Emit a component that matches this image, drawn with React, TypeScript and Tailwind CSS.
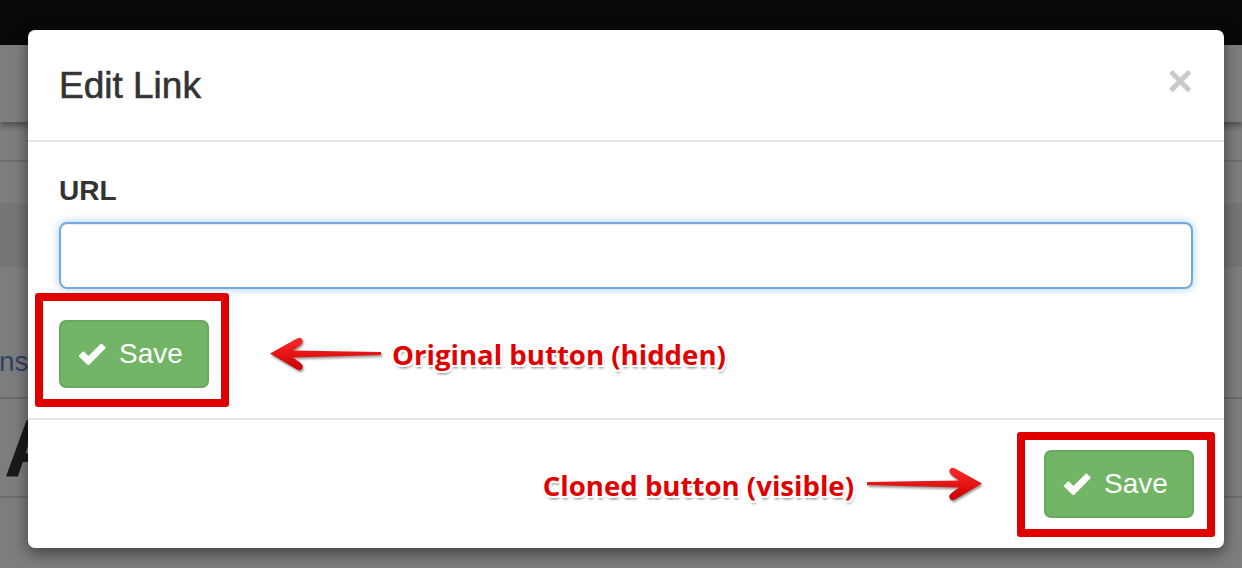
import React from "react";

function Check() {
  return (
    <svg width="28" height="23" viewBox="0 0 28 23" className="shrink-0">
      <path
        d="M1.2 12.2 L4.6 8.8 Q5.4 8 6.2 8.8 L10.4 13 L22.6 0.9 Q23.4 0.1 24.2 0.9 L27.3 4 Q28.1 4.8 27.3 5.6 L11.2 21.7 Q10.4 22.5 9.6 21.7 L1.2 13.8 Q0.4 13 1.2 12.2 Z"
        fill="#fff"
      />
    </svg>
  );
}

function Arrow({ flip, width, id }: { flip?: boolean; width: number; id: string }) {
  return (
    <svg
      width={width}
      height="36"
      viewBox={`0 0 ${width} 36`}
      className="shrink-0 drop-shadow-[1px_2px_1px_rgba(0,0,0,0.4)]"
    >
      <defs>
        <linearGradient id={id} x1="0" y1="0" x2="0" y2="1">
          <stop offset="0" stopColor="#ff2a2a" />
          <stop offset="1" stopColor="#c80000" />
        </linearGradient>
      </defs>
      <g transform={flip ? `translate(${width},0) scale(-1,1)` : undefined}>
        <path
          d={`M1 17.5 L28 2.5 Q32 0.5 33.5 4 Q34.5 7 31 9.5 L24 14.5 L${width} 16 L${width} 19 L24 21.5 L31 26.5 Q34.5 29 33.5 32 Q32 35.5 28 33.5 Z`}
          fill={`url(#${id})`}
        />
      </g>
    </svg>
  );
}

function Note({ children }: { children: React.ReactNode }) {
  return (
    <span className="whitespace-nowrap font-['Open_Sans',sans-serif] text-[27.6px] leading-[34px] font-bold text-[#e00000] [text-shadow:-2px_-2px_0_#fff,2px_-2px_0_#fff,-2px_2px_0_#fff,2px_2px_0_#fff,0_2px_0_#fff,0_-2px_0_#fff,2px_0_0_#fff,-2px_0_0_#fff,1px_3px_3px_rgba(0,0,0,0.55)]">
      {children}
    </span>
  );
}

function SaveButton() {
  return (
    <button className="flex h-[68px] w-[150px] shrink-0 items-center gap-[13px] rounded-[7px] border-2 border-[#68aa5c] bg-[#73b567] pl-[17px] text-[28px] leading-none text-white">
      <Check />
      <span>Save</span>
    </button>
  );
}

export default function App() {
  return (
    <div className="relative h-[568px] w-[1242px] overflow-hidden bg-[#fbfbfb] font-['Liberation_Sans',Arial,sans-serif]">
      {/* underlying page */}
      <div className="h-[45px] bg-[#111]" />
      <div className="relative h-[77px] bg-[#fdfdfd] shadow-[0_4px_6px_rgba(0,0,0,0.35)]" />
      <div className="h-[40px] border-b-2 border-[#dcdcdc]" />
      <div className="h-[41px]" />
      <div className="h-[64px] bg-[#ececec]" />
      <div className="flex h-[132px] items-center border-b-2 border-[#d6d6d6] pt-[60px]">
        <span className="-ml-[1px] text-[28px] leading-none text-[#5b8ac9]">ns</span>
      </div>
      <div className="flex h-[99px] items-center border-b-2 border-[#d6d6d6]">
        <span className="ml-[4px] text-[82px] leading-none font-bold text-[#333]">A</span>
      </div>

      {/* backdrop */}
      <div className="absolute inset-0 bg-black/50" />

      {/* modal */}
      <div className="absolute left-[28px] top-[30px] flex h-[518px] w-[1196px] flex-col rounded-[7px] bg-white shadow-[0_5px_15px_rgba(0,0,0,0.5)]">
        <div className="flex h-[112px] shrink-0 items-center justify-between border-b-2 border-[#e5e5e5] pl-[31px] pr-[31px]">
          <h4 className="text-[37px] leading-[37px] text-[#333] [-webkit-text-stroke:0.6px_#333]">Edit Link</h4>
          <span className="mb-[8px] text-[44px] leading-none font-bold text-[#c9c9c9]">×</span>
        </div>

        <div className="flex flex-col border-b-2 border-[#e5e5e5] px-[31px] pt-[35px] pb-[30px]">
          <label className="text-[28px] leading-[28px] font-bold text-[#333]">URL</label>
          <div className="mt-[17px] h-[67px] w-full rounded-[8px] border-2 border-[#74a9e0] shadow-[inset_0_1px_1px_rgba(0,0,0,0.08),0_0_8px_rgba(102,175,233,0.6)]" />
          <div className="mt-[31px] flex items-center">
            <div className="relative">
              <SaveButton />
              <div className="pointer-events-none absolute -left-[24px] -right-[20px] -top-[27px] -bottom-[19px] rounded-[3px] border-[8px] border-[#e10000]" />
            </div>
            <div className="ml-[60px]">
              <Arrow width={112} id="g1" />
            </div>
            <div className="ml-[11px] mt-[1px]">
              <Note>Original button (hidden)</Note>
            </div>
          </div>
        </div>

        <div className="flex flex-1 items-center justify-end pr-[30px]">
          <div className="mt-[3px]">
            <Note>Cloned button (visible)</Note>
          </div>
          <div className="ml-[13px] mr-[61px]">
            <Arrow width={116} flip id="g2" />
          </div>
          <div className="relative">
            <SaveButton />
            <div className="pointer-events-none absolute -left-[27px] -right-[21px] -top-[18px] -bottom-[19px] rounded-[3px] border-[8px] border-[#e10000]" />
          </div>
        </div>
      </div>
    </div>
  );
}
